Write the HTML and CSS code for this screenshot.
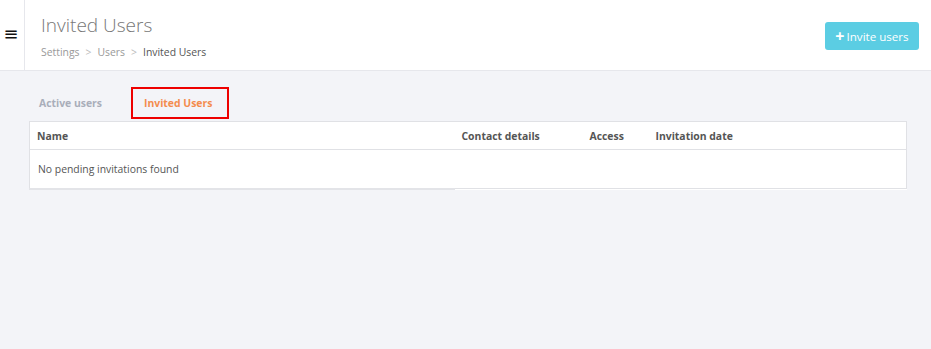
FILE: index.html
```html
<!DOCTYPE html>
<html>
<head>
<meta charset="utf-8">
<link rel="stylesheet" href="styles.css">
</head>
<body>
<div class="topbar">
  <div class="side"><span class="burger">&#8801;</span></div>
  <div class="head">
    <div class="titles">
      <h1 class="title">Invited Users</h1>
      <div class="crumbs"><span>Settings</span><span class="sep">&gt;</span><span>Users</span><span class="sep">&gt;</span><span class="cur">Invited Users</span></div>
    </div>
    <button class="invite"><span class="plus">+</span>Invite users</button>
  </div>
</div>
<div class="content">
  <div class="tabs">
    <div class="tab first">Active users</div>
    <div class="tab active">Invited Users</div>
  </div>
  <table class="grid">
    <thead>
      <tr><th class="c-name">Name</th><th class="c-contact">Contact details</th><th class="c-access">Access</th><th class="c-date">Invitation date</th></tr>
    </thead>
    <tbody>
      <tr><td class="empty">No pending invitations found</td><td></td><td></td><td></td></tr>
    </tbody>
  </table>
</div>
</body>
</html>
```
FILE: styles.css
```css
* { box-sizing: border-box; }
html, body { margin: 0; padding: 0; }
body {
  width: 931px; height: 349px;
  background: #f3f4f8;
  font-family: "Open Sans", "Noto Sans", sans-serif;
  color: #555;
  overflow: hidden;
}
.topbar {
  display: flex;
  height: 71px;
  background: #fff;
  border-bottom: 1px solid #e6e7ec;
}
.side {
  width: 25px;
  border-right: 1px solid #e6e7ec;
  display: flex;
  justify-content: center;
  padding-top: 23px;
}
.burger { font-size: 18px; line-height: 22px; color: #111; font-family: "DejaVu Sans", sans-serif; margin-left: -2px; }
.head {
  flex: 1;
  display: flex;
  justify-content: space-between;
  align-items: flex-start;
  padding: 12px 12px 0 16px;
}
.title {
  margin: 0;
  font-weight: 300;
  font-size: 19px;
  line-height: 26px;
  color: #777;
}
.crumbs {
  margin-top: 6px;
  font-size: 10.4px;
  line-height: 16px;
  color: #999;
}
.crumbs .sep { margin: 0 6px; color: #bbb; }
.crumbs .cur { color: #555; }
.invite {
  margin-top: 10px;
  width: 94px; height: 28px;
  border: none;
  border-radius: 3px;
  background: #5bcde3;
  color: #fff;
  font-family: "Open Sans", sans-serif;
  font-size: 11.6px;
  padding: 0;
  display: flex; align-items: center; justify-content: center;
}
.invite .plus { font-weight: 700; font-size: 16px; margin-right: 2px; line-height: 16px; }
.content { padding: 16px 24px 0 29px; }
.tabs { display: flex; height: 34px; align-items: flex-start; }
.tab {
  font-size: 10.4px; font-weight: 700; color: #a9aeba;
  padding: 9px 10px 0 10px;
  height: 32px;
}
.tab.first { width: 102px; }
.tab.active {
  width: 98px;
  border: 2px solid #ee0000;
  color: #f48c4e;
  padding: 7px 0 0 11px;
}
.grid {
  width: 878px;
  border-collapse: collapse;
  background: #fff;
  border: 1px solid #e0e1e5;
  font-size: 10.4px;
}
.grid th {
  text-align: left;
  font-weight: 700;
  color: #555;
  height: 28px;
  padding: 0 7px;
  border-bottom: 1px solid #e0e1e5;
}
.c-name { width: 425px; }
.c-contact { width: 128px; }
.c-access { width: 66px; }
.grid td { height: 39px; padding: 0 8px; }
.grid td.empty { border-bottom: 2px solid #e3e4e8; padding-top: 1px; }
```
